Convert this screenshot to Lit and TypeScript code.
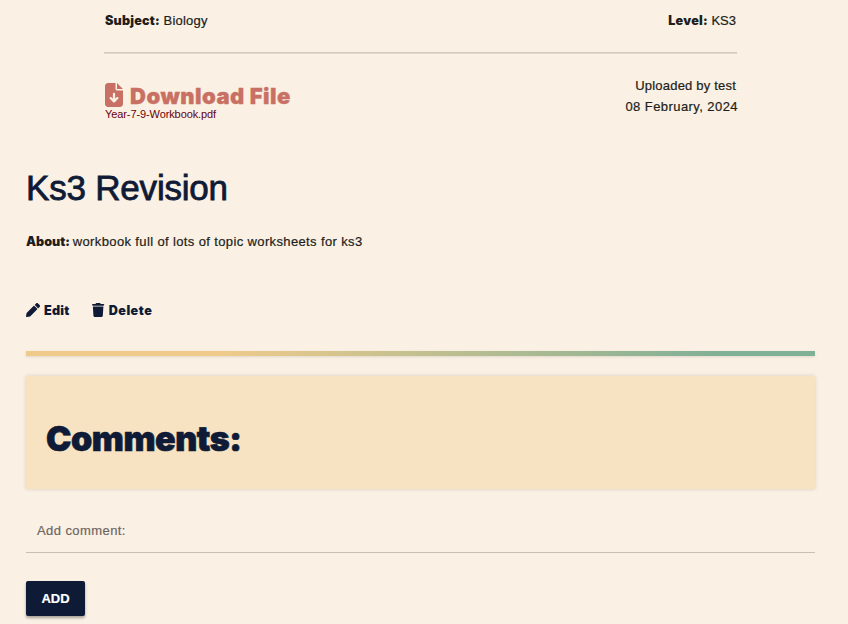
import { LitElement, html, css } from "lit";
import { customElement } from "lit/decorators.js";

@customElement("app-root")
export class AppRoot extends LitElement {
  static styles = css`
    :host {
      display: block;
      box-sizing: border-box;
      height: 624px;
      overflow: hidden;
      padding: 10px 33px 0 26px;
      background: #faf0e3;
      color: #211d1a;
      font: 13px/21px "Liberation Sans", Arial, sans-serif;
      -webkit-text-stroke: 0.2px currentColor;
    }
    * { box-sizing: border-box; }
    .meta { margin: 0 78px; height: 119px; }
    .row { display: flex; justify-content: space-between; white-space: nowrap; }
    .facts { padding: 0 1px; height: 42px; }
    .rule { height: 2px; background: linear-gradient(#d3cac0 50%, #e2d9cd 50%); }
    .file { padding: 21px 0 0 1px; }
    .strong { font-family: Inter, sans-serif; font-weight: 900; font-size: 12.6px; letter-spacing: 0.2px; -webkit-text-stroke: 0; }
    .subject { letter-spacing: 0.2px; }
    .download { display: flex; align-items: center; height: 24px; margin-top: 8px; color: #c97064; }
    .download svg { width: 18px; height: 24px; margin-right: 7px; }
    .download span { font: 900 22px/24px Inter, sans-serif; letter-spacing: 0.5px; padding-top: 2px; -webkit-text-stroke: 0.3px currentColor; }
    .name { font-size: 11px; line-height: 14px; letter-spacing: -0.1px; color: #68000d; -webkit-text-stroke: 0; }
    .upload { text-align: right; }
    .by { padding-right: 1px; letter-spacing: 0.2px; }
    .date { letter-spacing: 0.43px; margin-right: -1px; }
    .title { margin: 36px 0 0; height: 44px; font-size: 35px; line-height: 46px; font-weight: 400; letter-spacing: -0.2px; color: #0f1a36; -webkit-text-stroke: 0.8px #0f1a36; white-space: nowrap; }
    .about { margin-top: 22px; white-space: nowrap; }
    .about b { letter-spacing: 0; }
    .about span { letter-spacing: 0.37px; margin-left: -0.8px; }
    .actions { display: flex; margin-top: 48px; height: 21px; color: #0f1a36; }
    .action { display: flex; align-items: center; margin-right: 23px; }
    .action svg { height: 14px; margin: -2px 4px 0 0; }
    .delete { letter-spacing: 0.5px; }
    .bar { height: 5px; margin-top: 30px; background: linear-gradient(90deg, #efca8b 25%, #80b096 88%); box-shadow: 0 1px 3px #0000001c; }
    .comments { height: 113px; margin-top: 20px; padding: 40px 20px 0; background: #f7e2c1; box-shadow: 0 0 4px #00000026; }
    .comments h2 { margin: 0; color: #0f1a36; font: 900 34px/46px Inter, sans-serif; letter-spacing: -0.45px; -webkit-text-stroke: 0.7px currentColor; }
    .field { height: 64px; padding: 31px 11px 0; border-bottom: 1px solid #c8bfb5; color: #6c6763; letter-spacing: 0.42px; }
    .add { display: block; width: 59px; height: 35px; margin-top: 28px; padding: 0; border: 0; border-radius: 2px; background: #0f1a36; color: #fff; font: 700 13px/35px "Liberation Sans", sans-serif; box-shadow: 0 2px 3px #00000055; }
  `;

  render() {
    return html`
      <section class="meta">
        <div class="row facts">
          <div><b class="strong">Subject:</b> <span class="subject">Biology</span></div>
          <div><b class="strong">Level:</b> <span>KS3</span></div>
        </div>
        <div class="rule"></div>
        <div class="row file">
          <div>
            <div class="download">
              <svg viewBox="0 0 384 512" fill="currentColor"><path d="M64 0C29 0 0 29 0 64v384c0 35 29 64 64 64h256c35 0 64-29 64-64V160H256c-18 0-32-14-32-32V0H64zm192 0v128h128L256 0zM216 232v102l31-31c9-9 25-9 34 0s9 25 0 34l-72 72c-9 9-25 9-34 0l-72-72c-9-9-9-25 0-34s25-9 34 0l31 31V232c0-13 11-24 24-24s24 11 24 24z"/></svg>
              <span>Download File</span>
            </div>
            <div class="name">Year-7-9-Workbook.pdf</div>
          </div>
          <div class="upload"><div class="by">Uploaded by test</div><div class="date">08 February, 2024</div></div>
        </div>
      </section>
      <h1 class="title">Ks3 Revision</h1>
      <div class="about"><b class="strong">About:</b> <span>workbook full of lots of topic worksheets for ks3</span></div>
      <div class="actions">
        <div class="action"><svg viewBox="0 0 512 512" fill="currentColor"><path d="M498 142l-46 46c-5 5-12 5-17 0L324 77c-5-5-5-12 0-17l46-46c19-19 49-19 68 0l60 60c19 19 19 49 0 68zM284 100L22 362 0 484c-3 16 12 31 28 28l122-21 262-263c5-5 5-12 0-17L301 100c-5-5-12-5-17 0z"/></svg><b class="strong">Edit</b></div>
        <div class="action"><svg viewBox="0 0 448 512" fill="currentColor"><path d="M135 18C141 7 152 0 164 0h120c12 0 23 7 29 18l7 14h96c18 0 32 14 32 32s-14 32-32 32H32C14 96 0 82 0 64s14-32 32-32h96l7-14zM32 128h384l-21 339c-2 25-23 45-48 45H101c-25 0-46-20-48-45L32 128z"/></svg><b class="strong delete">Delete</b></div>
      </div>
      <div class="bar"></div>
      <section class="comments"><h2>Comments:</h2></section>
      <div class="field">Add comment:</div>
      <button class="add">ADD</button>
    `;
  }
}
